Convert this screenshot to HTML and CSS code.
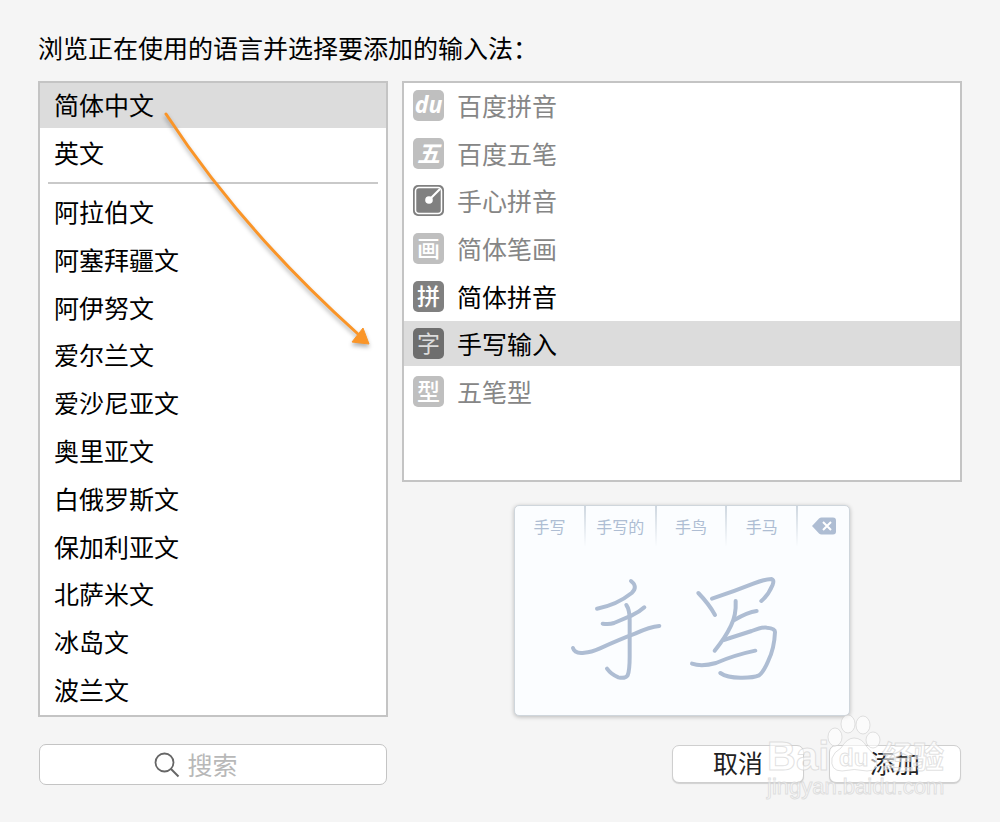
FILE: index.html
```html
<!DOCTYPE html>
<html lang="zh-CN">
<head>
    <meta charset="UTF-8">
    <meta name="viewport" content="width=device-width, initial-scale=1.0">
    <title>输入法</title>
    <link rel="stylesheet" href="styles.css">
</head>
<body>
    <form class="sheet">
        <h1>浏览正在使用的语言并选择要添加的输入法：</h1>

        <div class="columns">
            <div class="box languages">
                <ul class="recent">
                    <li><label><input type="radio" name="lang" checked>简体中文</label></li>
                    <li><label><input type="radio" name="lang">英文</label></li>
                </ul>
                <hr>
                <ul class="others">
                    <li><label><input type="radio" name="lang">阿拉伯文</label></li>
                    <li><label><input type="radio" name="lang">阿塞拜疆文</label></li>
                    <li><label><input type="radio" name="lang">阿伊努文</label></li>
                    <li><label><input type="radio" name="lang">爱尔兰文</label></li>
                    <li><label><input type="radio" name="lang">爱沙尼亚文</label></li>
                    <li><label><input type="radio" name="lang">奥里亚文</label></li>
                    <li><label><input type="radio" name="lang">白俄罗斯文</label></li>
                    <li><label><input type="radio" name="lang">保加利亚文</label></li>
                    <li><label><input type="radio" name="lang">北萨米文</label></li>
                    <li><label><input type="radio" name="lang">冰岛文</label></li>
                    <li><label><input type="radio" name="lang">波兰文</label></li>
                </ul>
                <svg class="arrow" width="240" height="260" viewBox="150 100 240 260" aria-hidden="true">
                    <path d="M166 114Q242 230 358 334" fill="none" stroke="#fa9528" stroke-width="3" stroke-linecap="round"/>
                    <path d="M369 344L363 328L352 342Z" fill="#fa9528" stroke="#fa9528" stroke-width="1" stroke-linejoin="round"/>
                </svg>
            </div>

            <div class="right">
                <div class="box methods">
                    <ul>
                        <li><label><input type="radio" name="method" disabled><span class="icon du">du</span>百度拼音</label></li>
                        <li><label><input type="radio" name="method" disabled><span class="icon wu">五</span>百度五笔</label></li>
                        <li><label><input type="radio" name="method" disabled><svg width="31" height="31" viewBox="0 0 31 31" aria-hidden="true">
                            <rect width="31" height="31" rx="5" fill="#808080"/>
                            <rect x="2.5" y="2.5" width="26" height="26" rx="3.5" fill="none" stroke="#fff" stroke-width="1.5"/>
                            <path d="M16 15L27 4" stroke="#fff" stroke-width="2.2"/>
                            <circle cx="16" cy="15" r="3.8" fill="#fff"/>
                        </svg>手心拼音</label></li>
                        <li><label><input type="radio" name="method" disabled><span class="icon">画</span>简体笔画</label></li>
                        <li><label><input type="radio" name="method"><span class="icon">拼</span>简体拼音</label></li>
                        <li><label><input type="radio" name="method" checked><span class="icon">字</span>手写输入</label></li>
                        <li><label><input type="radio" name="method" disabled><span class="icon">型</span>五笔型</label></li>
                    </ul>
                </div>

                <div class="pad">
                    <div class="candidates">
                        <button type="button">手写</button>
                        <button type="button">手写的</button>
                        <button type="button">手鸟</button>
                        <button type="button">手马</button>
                        <button type="button" aria-label="删除">
                            <svg width="24" height="18" viewBox="0 0 24 18">
                                <path d="M0 9L7 1.5Q8.2 0.5 9.5 0.5H21Q24 0.5 24 3.5V14.5Q24 17.5 21 17.5H9.5Q8.2 17.5 7 16.5Z" fill="#aebdd3"/>
                                <path d="M11 5L19 13M19 5L11 13" stroke="#fff" stroke-width="2"/>
                            </svg>
                        </button>
                    </div>
                    <svg class="writing" width="245" height="140" viewBox="0 0 735 420" aria-hidden="true">
                        <path d="M213 63Q235 80 215 99Q170 135 111 146"/>
                        <path d="M128 191Q148 194 162 189L214 167Q238 156 253 142"/>
                        <path d="M39 264Q44 282 73 278Q93 277 120 265Q180 238 225 221Q270 200 298 198"/>
                        <path d="M199 135Q209 149 209 180V290Q209 330 203 346Q195 357 175 352Q154 344 141 326"/>
                        <path d="M415 99Q447 132 465 165"/>
                        <path d="M456 116Q520 95 580 71Q615 57 635 57Q643 60 638 74Q626 104 604 123"/>
                        <path d="M527 123Q529 165 513 197Q496 233 464 272"/>
                        <path d="M523 180Q562 157 590 153"/>
                        <path d="M491 240L575 213Q610 200 620 203Q645 205 645 216Q643 265 625 302Q610 337 597 346Q582 353 547 353Q502 354 481 339"/>
                        <path d="M396 311Q425 321 468 309Q524 285 586 272"/>
                    </svg>
                </div>
            </div>
        </div>

        <div class="footer">
            <label class="search">
                <svg width="26" height="26" viewBox="0 0 26 26" aria-hidden="true">
                    <circle cx="10.5" cy="10.5" r="9" fill="none" stroke="#666" stroke-width="1.8"/>
                    <path d="M17 17L24.5 24.5" stroke="#666" stroke-width="2"/>
                </svg>
                <input type="text" placeholder="搜索" aria-label="搜索">
            </label>
            <div class="buttons">
                <button type="button">取消</button>
                <button type="submit">添加</button>
                <svg class="mark" width="190" height="96" viewBox="762 708 190 96">
                    <ellipse cx="835" cy="737" rx="7" ry="9"/>
                    <ellipse cx="848" cy="724" rx="7" ry="9"/>
                    <ellipse cx="863" cy="725" rx="7" ry="9"/>
                    <ellipse cx="873" cy="740" rx="7" ry="8"/>
                    <path d="M854 738Q862 738 867 747Q872 752 876 758Q880 771 867 771Q854 768 842 771Q830 771 832 758Q834 752 841 748Q847 738 854 738Z"/>
                    <text x="767" y="770" class="bai">Bai</text>
                    <text x="839" y="766" class="paw-text">du</text>
                    <text x="882" y="768" class="jingyan">经验</text>
                    <text x="767" y="794" class="url">jingyan.baidu.com</text>
                </svg>
            </div>
        </div>
    </form>
</body>
</html>
```
FILE: styles.css
```css
* {
    box-sizing: border-box;
}
body {
    margin: 0;
    background-color: #f5f5f5;
    color: #000;
    font-family: "Noto Sans CJK SC", sans-serif;
    font-size: 25px;
}
.sheet {
    padding: 28px 38px;
}
h1 {
    margin: 0 0 15px;
    font-size: 25px;
    font-weight: normal;
    line-height: 38px;
}
ul {
    display: flex;
    flex-direction: column;
    justify-content: space-between;
    list-style-type: none;
    margin: 0;
    padding: 0;
}
button,
input {
    font-family: inherit;
}

.columns,
.footer {
    display: grid;
    grid-template-columns: 350fr 560fr;
    column-gap: 14px;
}
.box {
    position: relative;
    background-color: #fff;
    border: 2px solid #c4c4c4;
}
.box label {
    display: flex;
    align-items: center;
    height: 45px;
    line-height: 43px;
}
.box label:has(:checked) {
    background-color: #dcdcdc;
}
.box input {
    position: absolute;
    opacity: 0;
    pointer-events: none;
}

/* languages */
.languages label {
    padding: 0 0 2px 14px;
}
.recent {
    gap: 3px;
}
.languages hr {
    height: 2px;
    margin: 6px 8px;
    border: none;
    background-color: #c9c9c9;
}
.others {
    height: 523px;
    margin-bottom: 2px;
}
.arrow {
    position: absolute;
    left: 110px;
    top: 17px;
    filter: drop-shadow(0 3px 2px rgba(0, 0, 0, 0.3));
    pointer-events: none;
}

/* input methods */
.right {
    display: flex;
    flex-direction: column;
    align-items: center;
    gap: 23px;
}
.methods {
    width: 100%;
    padding-bottom: 66px;
}
.methods ul {
    height: 331px;
}
.methods label {
    gap: 13px;
    padding-left: 9px;
}
.methods label:has(:disabled) {
    color: #868686;
}
.icon {
    width: 31px;
    height: 31px;
    border-radius: 5px;
    background-color: #808080;
    color: #fff;
    font-size: 23px;
    font-weight: 500;
    line-height: 28px;
    text-align: center;
}
:disabled + .icon {
    background-color: #bfbfbf;
}
:checked + .icon {
    background-color: #6e6e6e;
    color: #dcdcdc;
    font-weight: normal;
}
.du {
    font-family: "Open Sans", sans-serif;
    font-weight: bold;
    font-style: italic;
}
.wu {
    font-weight: bold;
    font-style: italic;
}

/* handwriting preview */
.pad {
    width: 60%;
    height: 211px;
    border: 1px solid #cfd6dc;
    border-radius: 5px;
    background-color: #fbfdff;
    box-shadow: 0 1px 4px rgba(0, 0, 0, 0.25);
    text-align: center;
}
.candidates {
    display: grid;
    grid-template-columns: repeat(4, 71fr) 51fr;
}
.candidates button {
    height: 40px;
    padding: 0;
    border: none;
    border-right: 2px solid;
    border-image: linear-gradient(#cdd6df, #fbfdff) 1;
    background: none;
    color: #aebdd3;
    font-size: 16px;
    line-height: 40px;
}
.candidates button:last-child {
    border: none;
}
.candidates svg {
    display: block;
    margin: 0 auto;
}
.writing {
    margin-top: 14px;
    fill: none;
    stroke: #aebdd3;
    stroke-width: 12;
    stroke-linecap: round;
    stroke-linejoin: round;
}

/* bottom bar */
.footer {
    margin-top: 27px;
}
.search {
    display: flex;
    align-items: center;
    justify-content: center;
    gap: 8px;
    height: 41px;
    margin: 0 1px;
    border: 1px solid #c4c4c4;
    border-radius: 7px;
    background-color: #fff;
}
.search input {
    width: 85px;
    padding: 0 0 2px;
    border: none;
    outline: none;
    background: none;
    font-size: 25px;
    line-height: 36px;
}
.search input::placeholder {
    color: #b8b8b8;
}
.buttons {
    display: flex;
    justify-content: flex-end;
    gap: 25px;
    position: relative;
    padding: 1px 1px 0 0;
}
.buttons button {
    width: 132px;
    height: 38px;
    padding: 0 0 4px;
    border: 1px solid #cfcfcf;
    border-radius: 7px;
    background-color: #fff;
    box-shadow: 0 1px 1px rgba(0, 0, 0, 0.15);
    color: #222;
    font-size: 25px;
    line-height: 32px;
}
.mark {
    position: absolute;
    right: 10px;
    top: -36px;
    fill: rgba(255, 255, 255, 0.6);
    stroke: rgba(205, 205, 205, 0.6);
    stroke-width: 1;
    pointer-events: none;
}
.bai {
    font: bold 40px "Liberation Sans", sans-serif;
}
.paw-text {
    font: bold 24px "Liberation Sans", sans-serif;
}
.jingyan {
    font: bold 31px "Noto Sans CJK SC", sans-serif;
}
.url {
    font: 22px "Liberation Sans", sans-serif;
}
```
